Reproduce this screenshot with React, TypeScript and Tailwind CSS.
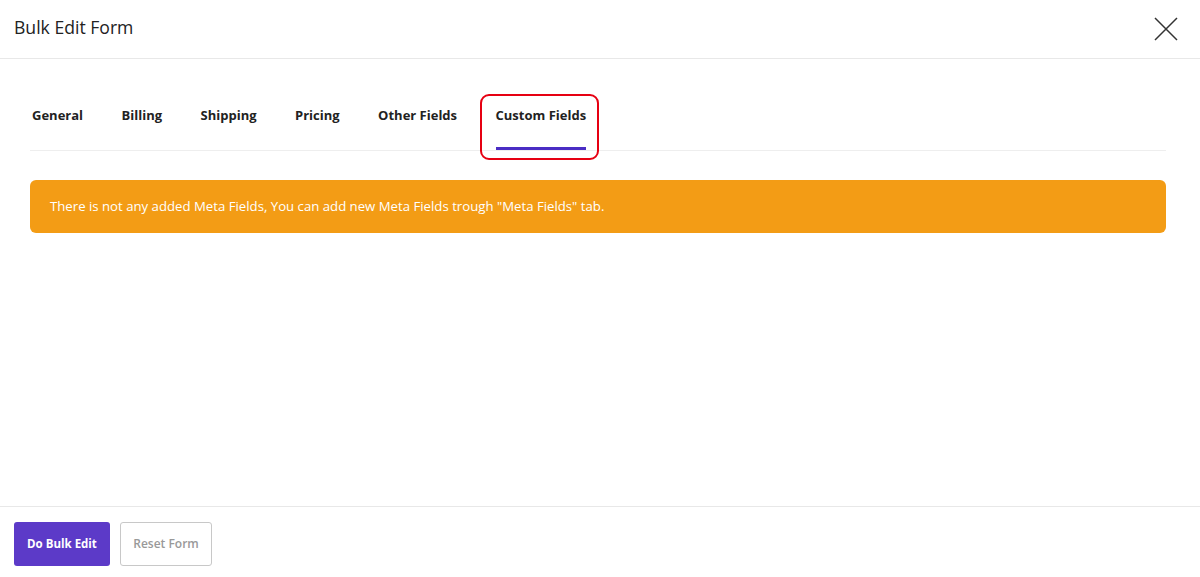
const tabs = ["General", "Billing", "Shipping", "Pricing", "Other Fields", "Custom Fields"];

export default function App() {
  const active = "Custom Fields";

  return (
    <div className="flex h-[577px] w-[1200px] flex-col bg-white font-['Open_Sans',sans-serif] text-[#222]">
      <header className="flex h-[59px] shrink-0 items-center justify-between border-b border-[#e8e8e8] pl-[14px] pr-[22px]">
        <h1 className="-mt-[4px] text-[17.6px] text-[#222]">Bulk Edit Form</h1>
        <button type="button" className="text-[#333]" aria-label="Close">
          <svg width="24" height="24" viewBox="0 0 24 24" fill="none" stroke="currentColor" strokeWidth="1.5">
            <path d="M1 1l22 22M23 1L1 23" />
          </svg>
        </button>
      </header>

      <main className="flex-1 pl-[30px] pr-[34px]">
        <nav className="mt-[36px] flex gap-[34.5px] border-b border-[#eeeeee]">
          {tabs.map((tab) => (
            <div key={tab} className="relative px-[2px]">
              <span className="block h-[52px] pt-[11px] text-[13px] font-bold leading-[18px] text-[#222]">
                {tab}
              </span>
              {tab === active ? (
                <>
                  <div className="h-[3px] bg-[#4a2dc4]" />
                  <div className="absolute -left-[14px] -right-[11px] -top-[1px] -bottom-[10px] rounded-[9px] border-2 border-[#e60012]" />
                </>
              ) : (
                <div className="h-[3px]" />
              )}
            </div>
          ))}
        </nav>

        <div className="mt-[29px] flex h-[53px] items-center rounded-[6px] bg-[#f39c15] px-[20px] text-[13.2px] text-white">
          There is not any added Meta Fields, You can add new Meta Fields trough "Meta Fields" tab.
        </div>
      </main>

      <footer className="flex h-[71px] shrink-0 items-start gap-[10px] border-t border-[#e8e8e8] pl-[14px] pt-[15px]">
        <button
          type="button"
          className="h-[44px] w-[96px] rounded-[3px] bg-[#5c3ac8] text-[11.5px] font-bold text-white"
        >
          Do Bulk Edit
        </button>
        <button
          type="button"
          className="h-[44px] w-[92px] rounded-[3px] border border-[#c8c8c8] bg-white text-[12px] font-semibold text-[#999]"
        >
          Reset Form
        </button>
      </footer>
    </div>
  );
}
